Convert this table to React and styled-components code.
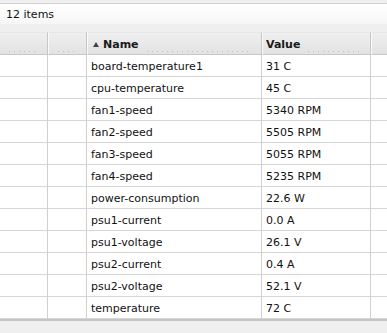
import { Fragment } from 'react'
import { createGlobalStyle, styled } from 'styled-components'

const GlobalStyle = createGlobalStyle`
  html, body {
    margin: 0;
    padding: 0;
    background: #efefef;
  }
  body {
    font-family: "DejaVu Sans", Verdana, sans-serif;
    font-size: 11px;
    color: #000;
  }
`

const COLS = '48px 39px 175px 109px 1fr'

const Page = styled.div`
  width: 387px;
  height: 333px;
  padding-top: 3px;
  box-sizing: border-box;
  overflow: hidden;
`

const Toolbar = styled.div`
  height: 21px;
  box-sizing: border-box;
  border-top: 1px solid #d0d0d0;
  background: linear-gradient(#ffffff, #f6f6f6);
  display: flex;
  align-items: center;
  padding: 1px 0 0 6px;
  color: #111;
`

const Spacer = styled.div`
  height: 8px;
`

const Grid = styled.div`
  display: grid;
  grid-template-columns: ${COLS};
  background: #fff;
  border-bottom: 2px solid #c4c4c4;
`

const HeadCell = styled.div`
  height: 23px;
  box-sizing: border-box;
  border-top: 1px solid #e6e6e6;
  border-bottom: 1px solid #c8c8c8;
  border-right: 1px solid #c6c6c6;
  border-left: 1px solid #fafafa;
  background: linear-gradient(#efefef, #e2e2e2);
  display: flex;
  align-items: center;
  gap: 8px;
  padding: 1px 9px 0 ${(p) => p.$pad || 9}px;
  font-weight: bold;
  color: #1a1a1a;
  &:first-child {
    border-left: none;
  }
`

const Dots = styled.span`
  flex: 1;
  align-self: flex-end;
  height: 1px;
  margin-bottom: 2px;
  background: repeating-linear-gradient(90deg, #bdbdbd 0 1px, transparent 1px 5px);
`

const SortArrow = styled.span`
  display: inline-block;
  width: 0;
  height: 0;
  border-left: 3px solid transparent;
  border-right: 3px solid transparent;
  border-bottom: 5px solid #444;
  margin-top: 1px;
`

const Label = styled.span`
  display: flex;
  align-items: center;
  gap: 4px;
`

const Cell = styled.div`
  height: 22px;
  box-sizing: border-box;
  border-bottom: 1px solid #d6d6d6;
  border-right: 1px solid #d0d0d0;
  display: flex;
  align-items: center;
  padding: 1px 0 0 4px;
  white-space: nowrap;
  color: #111;
`

const rows = [
  ['board-temperature1', '31 C'],
  ['cpu-temperature', '45 C'],
  ['fan1-speed', '5340 RPM'],
  ['fan2-speed', '5505 RPM'],
  ['fan3-speed', '5055 RPM'],
  ['fan4-speed', '5235 RPM'],
  ['power-consumption', '22.6 W'],
  ['psu1-current', '0.0 A'],
  ['psu1-voltage', '26.1 V'],
  ['psu2-current', '0.4 A'],
  ['psu2-voltage', '52.1 V'],
  ['temperature', '72 C'],
]

export default function App() {
  return (
    <>
      <GlobalStyle />
      <Page>
        <Toolbar>12 items</Toolbar>
        <Spacer />
        <Grid>
          <HeadCell><Dots /></HeadCell>
          <HeadCell><Dots /></HeadCell>
          <HeadCell $pad={5}>
            <Label><SortArrow /> Name</Label>
            <Dots />
          </HeadCell>
          <HeadCell $pad={3}>
            <Label>Value</Label>
            <Dots />
          </HeadCell>
          <HeadCell />
          {rows.map(([name, value]) => (
            <Fragment key={name}>
              <Cell />
              <Cell />
              <Cell>{name}</Cell>
              <Cell>{value}</Cell>
              <Cell />
            </Fragment>
          ))}
        </Grid>
      </Page>
    </>
  )
}
